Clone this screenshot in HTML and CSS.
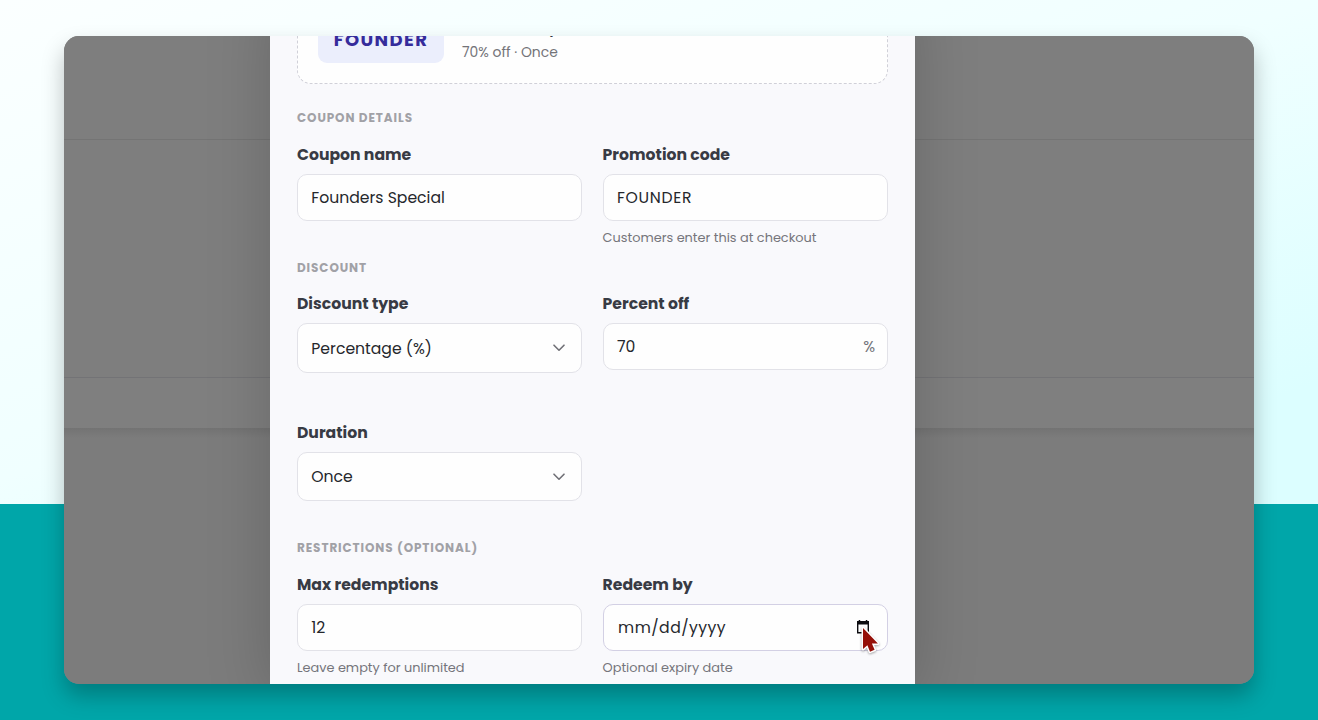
FILE: index.html
```html
<!DOCTYPE html>
<html lang="en">
<head>
    <meta charset="UTF-8">
    <meta name="viewport" content="width=device-width, initial-scale=1.0">
    <title>Create Coupon</title>
    <link rel="stylesheet" href="styles.css">
</head>
<body>

<div class="stage">
    <div class="backdrop">
        <div class="band band-top"></div>
        <div class="band band-middle"></div>
        <div class="band band-row"></div>
        <div class="band band-bottom"></div>
    </div>

    <form class="modal">
        <!-- Coupon preview -->
        <div class="preview">
            <div class="preview-code">FOUNDER</div>
            <div>
                <div class="preview-name">Founders Special</div>
                <div class="preview-info">70% off · Once</div>
            </div>
        </div>

        <h3 class="section-details">Coupon details</h3>
        <div class="row">
            <div class="field">
                <label for="coupon-name">Coupon name</label>
                <input type="text" id="coupon-name" value="Founders Special">
            </div>
            <div class="field">
                <label for="promo-code">Promotion code</label>
                <input type="text" id="promo-code" class="code-input" value="FOUNDER">
                <p class="hint">Customers enter this at checkout</p>
            </div>
        </div>

        <h3 class="section-discount">Discount</h3>
        <div class="row">
            <div class="field">
                <label for="discount-type">Discount type</label>
                <div class="control">
                    <select id="discount-type">
                        <option>Percentage (%)</option>
                        <option>Fixed amount</option>
                    </select>
                    <svg class="chevron" viewBox="0 0 12 8"><path d="M1 1.2l5 5 5-5"/></svg>
                </div>
            </div>
            <div class="field">
                <label for="percent-off">Percent off</label>
                <div class="control">
                    <input type="text" id="percent-off" value="70">
                    <span class="suffix">%</span>
                </div>
            </div>
        </div>
        <div class="row row-duration">
            <div class="field">
                <label for="duration">Duration</label>
                <div class="control">
                    <select id="duration">
                        <option>Once</option>
                        <option>Forever</option>
                    </select>
                    <svg class="chevron" viewBox="0 0 12 8"><path d="M1 1.2l5 5 5-5"/></svg>
                </div>
            </div>
        </div>

        <h3 class="section-restrictions">Restrictions (optional)</h3>
        <div class="row">
            <div class="field">
                <label for="max-redemptions">Max redemptions</label>
                <input type="text" id="max-redemptions" value="12">
                <p class="hint">Leave empty for unlimited</p>
            </div>
            <div class="field">
                <label for="redeem-by">Redeem by</label>
                <div class="control">
                    <input type="text" id="redeem-by" class="date-input" value="mm/dd/yyyy">
                    <svg class="calendar" viewBox="0 0 14 14">
                        <path d="M1 1h1.7V0h1.5v1h5.6V0h1.5v1H13v12.5H1zM2.4 4.6v7.5h9.2V4.6z" fill-rule="evenodd"/>
                    </svg>
                    <svg class="cursor" viewBox="0 0 20 30">
                        <path d="M3 3v21l4.4-3.8 2.6 6.5 4.6-1.9-2.7-6.3h6z"/>
                    </svg>
                </div>
                <p class="hint">Optional expiry date</p>
            </div>
        </div>
    </form>
</div>

</body>
</html>
```
FILE: styles.css
```css
* {
    box-sizing: border-box;
}
body {
    margin: 0;
    height: 720px;
    padding: 36px 64px;
    overflow: hidden;
    font-family: 'Poppins', 'Inter', sans-serif;
    background: linear-gradient(#00a6a9, #00a6a9) 0 504px no-repeat, linear-gradient(160deg, #fbffff 0%, #f0ffff 40%, #dcfeff 72%);
}
.stage {
    position: relative;
    display: flex;
    height: 648px;
    padding-left: 206px;
    border-radius: 15px;
    overflow: hidden;
    background-color: #7c7c7c;
}
body::before {
    content: "";
    position: absolute;
    left: 64px;
    top: 36px;
    width: 1190px;
    height: 648px;
    border-radius: 15px;
    box-shadow: 0 12px 22px rgba(0, 0, 0, 0.25);
}

/* dimmed page behind the modal */
.backdrop {
    position: absolute;
    inset: 0;
}
.band-top {
    height: 104px;
    border-bottom: 1px solid #747474;
    background-color: #7e7e7e;
}
.band-middle {
    height: 238px;
    border-bottom: 1px solid #737376;
    background-color: #7e7e7e;
}
.band-row {
    height: 50px;
    background-color: #7f7f7f;
}
.band-bottom {
    height: 256px;
    background: linear-gradient(#737373, #7c7c7c 10px);
}
.modal {
    position: relative;
    width: 645px;
    height: 700px;
    flex: none;
    margin-top: -40px;
    padding: 0 27px;
    background-color: #f9f9fc;
    box-shadow: 0 0 60px rgba(0, 0, 0, 0.18);
}
.preview {
    display: flex;
    align-items: center;
    gap: 18px;
    height: 88px;
    padding: 0 20px;
    border: 1px dashed #d0d0d8;
    border-radius: 14px;
    background-color: #fefefe;
}
.preview-code {
    width: 126px;
    height: 47px;
    margin-bottom: 2px;
    border-radius: 9px;
    background-color: #ebeefc;
    color: #352b9b;
    font-size: 18px;
    font-weight: 700;
    line-height: 47px;
    letter-spacing: 1.4px;
    text-align: center;
}
.preview-name {
    color: #333740;
    font-size: 15.65px;
    font-weight: 600;
    line-height: 23px;
}
.preview-info {
    color: #737378;
    font-size: 13.9px;
    line-height: 26px;
}
h3 {
    margin: 0 0 16.4px;
    color: #a1a1a6;
    font-size: 12px;
    font-weight: 700;
    line-height: 16px;
    letter-spacing: 0.9px;
    text-transform: uppercase;
}
.section-details {
    margin-top: 26.4px;
}
.section-discount {
    margin-top: 12.8px;
}
.section-restrictions {
    margin-top: 38.8px;
}
.row {
    display: grid;
    grid-template-columns: 1fr 1fr;
    gap: 20.2px;
}
.row-duration {
    margin-top: 48.3px;
}
label {
    display: block;
    margin-bottom: 8px;
    color: #383b44;
    font-size: 15.65px;
    font-weight: 700;
    line-height: 23px;
}
input, select {
    display: block;
    width: 100%;
    height: 47px;
    padding: 0 13.3px;
    border: 1px solid #e2e2e8;
    border-radius: 10px;
    outline: none;
    background-color: #fefefe;
    color: #25272c;
    font-family: inherit;
    font-size: 15.65px;
    appearance: none;
}
select {
    height: 49.4px;
}
.code-input {
    letter-spacing: 0.7px;
}
.date-input {
    padding-left: 14.5px;
    border-color: #d3d0e4;
    letter-spacing: 0.45px;
}
.hint {
    margin: 8.4px 0 0;
    color: #75757b;
    font-size: 12.88px;
    line-height: 18px;
}
.control {
    position: relative;
}
.chevron {
    position: absolute;
    right: 17px;
    top: 21px;
    width: 12px;
    height: 8px;
    fill: none;
    stroke: #707076;
    stroke-width: 1.6;
    stroke-linecap: round;
    stroke-linejoin: round;
}
.suffix {
    position: absolute;
    right: 13px;
    top: 12px;
    color: #75757b;
    font-size: 15.65px;
    line-height: 23px;
}
.calendar {
    position: absolute;
    right: 18px;
    top: 16px;
    width: 14px;
    height: 14px;
    fill: #0c0c10;
}
.cursor {
    position: absolute;
    right: 8px;
    top: 21px;
    width: 20px;
    height: 30px;
    fill: #951008;
    stroke: #fff;
    stroke-width: 3;
    stroke-linejoin: round;
    paint-order: stroke;
    filter: drop-shadow(0 1px 1px rgba(0, 0, 0, 0.35));
}
```
